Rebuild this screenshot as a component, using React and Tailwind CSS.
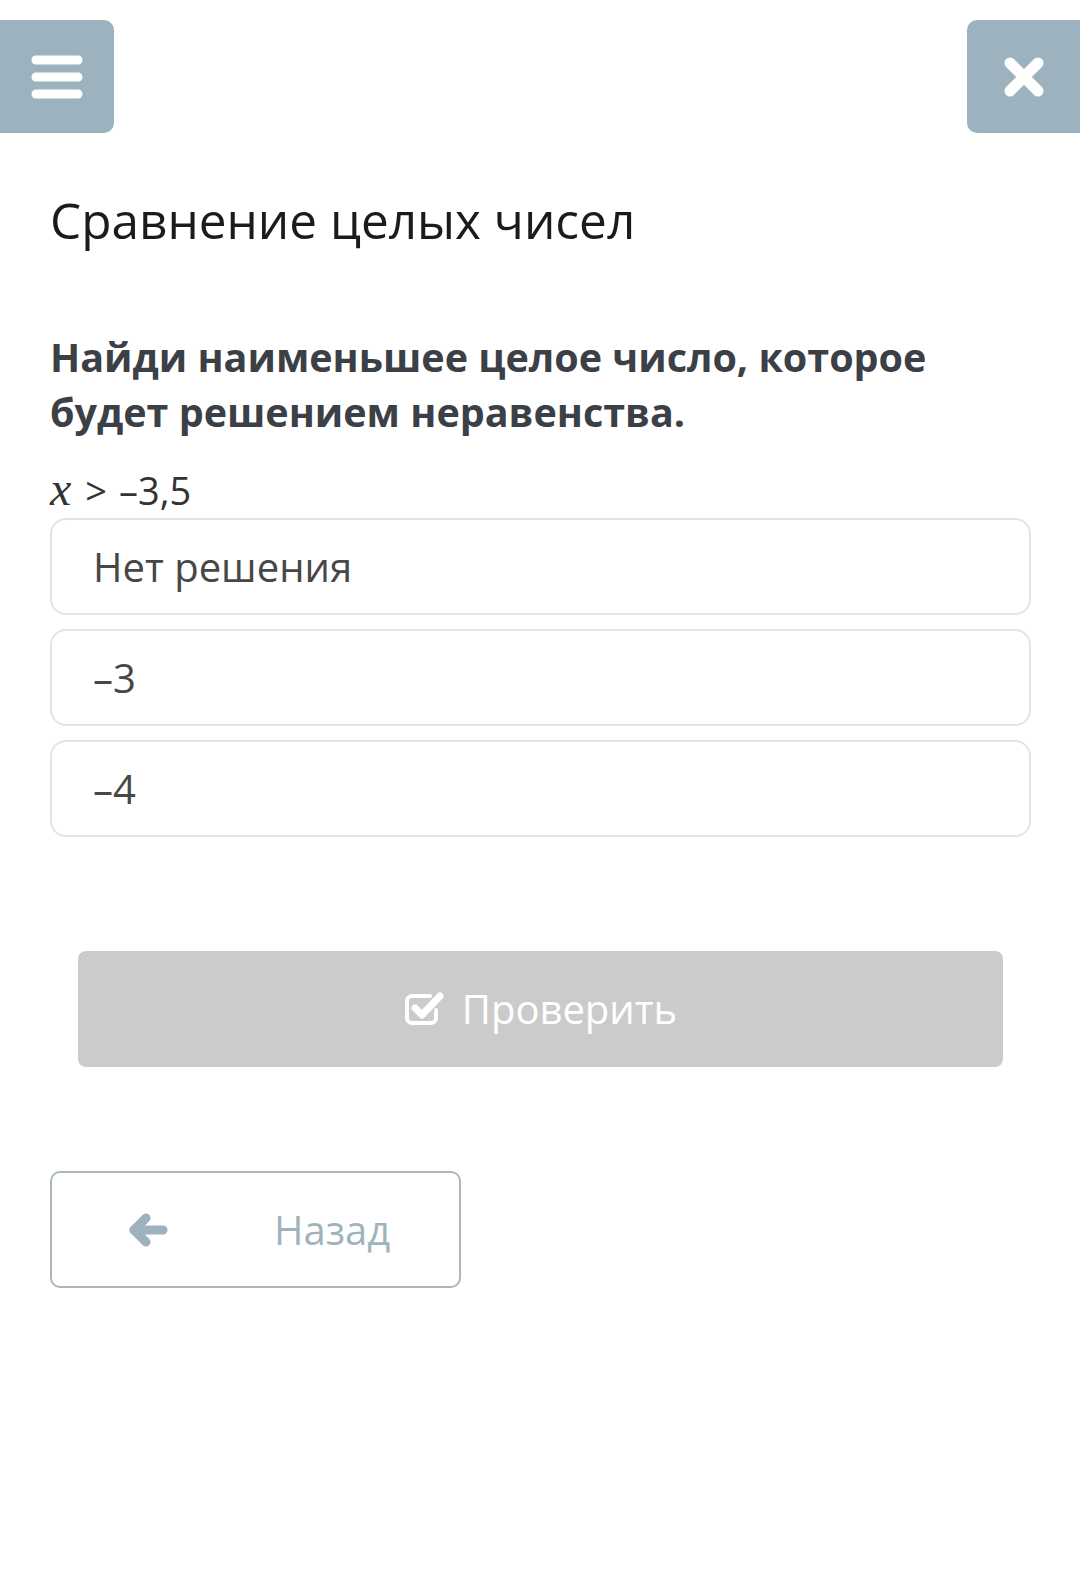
import React from 'react';

const font = { fontFamily: '"Open Sans", "Noto Sans", sans-serif' };

const options = ['Нет решения', '–3', '–4'];

const BarsIcon = () => (
  <svg width="52" height="44" viewBox="0 0 52 44">
    <g stroke="#fff" strokeWidth="9" strokeLinecap="round">
      <line x1="5" y1="5" x2="47" y2="5" />
      <line x1="5" y1="22" x2="47" y2="22" />
      <line x1="5" y1="39" x2="47" y2="39" />
    </g>
  </svg>
);

const TimesIcon = () => (
  <svg width="42" height="42" viewBox="0 0 42 42">
    <g stroke="#fff" strokeWidth="11" strokeLinecap="round">
      <line x1="7" y1="7" x2="35" y2="35" />
      <line x1="35" y1="7" x2="7" y2="35" />
    </g>
  </svg>
);

const CheckSquareIcon = () => (
  <svg width="44" height="36" viewBox="0 0 44 36">
    <path
      d="M32 19 V27 a5 5 0 0 1 -5 5 H8 a5 5 0 0 1 -5 -5 V10 a5 5 0 0 1 5 -5 H26"
      fill="none"
      stroke="#fff"
      strokeWidth="4"
      strokeLinecap="round"
    />
    <path
      d="M11 17 L18 24 L36 5"
      fill="none"
      stroke="#fff"
      strokeWidth="7"
      strokeLinecap="round"
      strokeLinejoin="round"
    />
  </svg>
);

const ArrowLeftIcon = () => (
  <svg width="40" height="36" viewBox="0 0 40 36">
    <g fill="none" stroke="#9db2bf" strokeWidth="9" strokeLinecap="round" strokeLinejoin="round">
      <line x1="6" y1="18" x2="35" y2="18" />
      <polyline points="18,6 6,18 18,30" />
    </g>
  </svg>
);

const App = () => {
  return (
    <div className="min-h-[1582px] w-[1080px] bg-white" style={font}>
      <div className="flex justify-between pt-[20px]">
        <div className="flex h-[113px] w-[114px] items-center justify-center rounded-r-[10px] bg-[#9db2bf]">
          <BarsIcon />
        </div>
        <div className="flex h-[113px] w-[113px] items-center justify-center rounded-l-[10px] bg-[#9db2bf]">
          <TimesIcon />
        </div>
      </div>

      <div className="px-[50px] pr-[49px]">
        <h1 className="mt-[59px] text-[49.5px] leading-[56px] font-normal text-[#1b1b1b]">
          Сравнение целых чисел
        </h1>

        <p className="mt-[82px] max-w-[900px] text-[39.5px] leading-[55px] font-bold text-[#3b4047]">
          Найди наименьшее целое число, которое будет решением неравенства.
        </p>

        <div className="mt-[29px] flex items-baseline text-[38px] leading-[40px] text-[#333]">
          <span
            className="mr-[14px] text-[48px] italic"
            style={{ fontFamily: '"Liberation Serif", "DejaVu Serif", serif' }}
          >
            x
          </span>
          <span className="mr-[12px]">&gt;</span>
          <span>–3,5</span>
        </div>

        <div className="mt-[8px] flex flex-col gap-[14px]">
          {options.map(option => (
            <div
              key={option}
              className="flex h-[97px] items-center rounded-[16px] border-2 border-[#e4e4e4] px-[41px] text-[40px] text-[#474747]"
            >
              {option}
            </div>
          ))}
        </div>

        <div className="mx-[28px] mt-[114px] flex h-[116px] items-center justify-center gap-[14px] rounded-[8px] bg-[#cbcbcb] text-[40px] text-white">
          <CheckSquareIcon />
          <span>Проверить</span>
        </div>

        <div className="mt-[104px] flex h-[117px] w-[411px] items-center gap-[106px] rounded-[10px] border-2 border-[#abb7be] pl-[76px] text-[40px] text-[#9fb3bf]">
          <ArrowLeftIcon />
          <span>Назад</span>
        </div>
      </div>
    </div>
  );
};

export default App;
